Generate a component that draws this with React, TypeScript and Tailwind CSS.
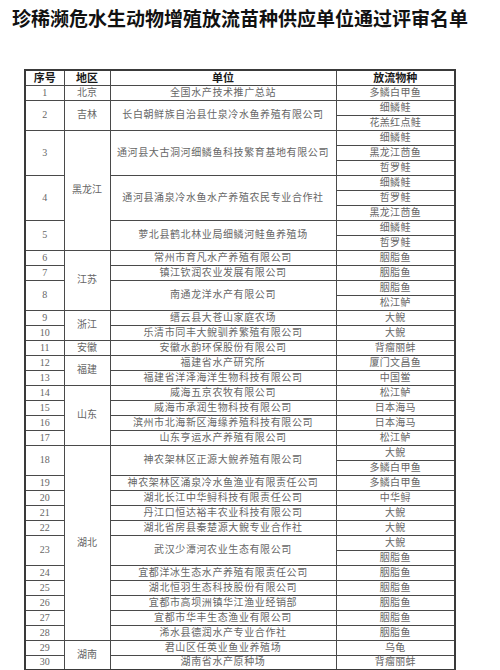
import React from "react";

type Unit = { no: number; name: string; species: string[] };
type Region = { name: string; units: Unit[] };

const REGIONS: Region[] = [
  { name: "北京", units: [{ no: 1, name: "全国水产技术推广总站", species: ["多鳞白甲鱼"] }] },
  {
    name: "吉林",
    units: [{ no: 2, name: "长白朝鲜族自治县仕泉冷水鱼养殖有限公司", species: ["细鳞鲑", "花羔红点鲑"] }],
  },
  {
    name: "黑龙江",
    units: [
      { no: 3, name: "通河县大古洞河细鳞鱼科技繁育基地有限公司", species: ["细鳞鲑", "黑龙江茴鱼", "哲罗鲑"] },
      { no: 4, name: "通河县涌泉冷水鱼水产养殖农民专业合作社", species: ["细鳞鲑", "哲罗鲑", "黑龙江茴鱼"] },
      { no: 5, name: "萝北县鹤北林业局细鳞河鲑鱼养殖场", species: ["细鳞鲑", "哲罗鲑"] },
    ],
  },
  {
    name: "江苏",
    units: [
      { no: 6, name: "常州市育凡水产养殖有限公司", species: ["胭脂鱼"] },
      { no: 7, name: "镇江钦润农业发展有限公司", species: ["胭脂鱼"] },
      { no: 8, name: "南通龙洋水产有限公司", species: ["胭脂鱼", "松江鲈"] },
    ],
  },
  {
    name: "浙江",
    units: [
      { no: 9, name: "缙云县大苍山家庭农场", species: ["大鲵"] },
      { no: 10, name: "乐清市同丰大鲵驯养繁殖有限公司", species: ["大鲵"] },
    ],
  },
  { name: "安徽", units: [{ no: 11, name: "安徽水韵环保股份有限公司", species: ["背瘤丽蚌"] }] },
  {
    name: "福建",
    units: [
      { no: 12, name: "福建省水产研究所", species: ["厦门文昌鱼"] },
      { no: 13, name: "福建省洋泽海洋生物科技有限公司", species: ["中国鲎"] },
    ],
  },
  {
    name: "山东",
    units: [
      { no: 14, name: "威海五京农牧有限公司", species: ["松江鲈"] },
      { no: 15, name: "威海市承润生物科技有限公司", species: ["日本海马"] },
      { no: 16, name: "滨州市北海新区海缘养殖科技有限公司", species: ["日本海马"] },
      { no: 17, name: "山东亨运水产养殖有限公司", species: ["松江鲈"] },
    ],
  },
  {
    name: "湖北",
    units: [
      { no: 18, name: "神农架林区正源大鲵养殖有限公司", species: ["大鲵", "多鳞白甲鱼"] },
      { no: 19, name: "神农架林区涌泉冷水鱼渔业有限责任公司", species: ["多鳞白甲鱼"] },
      { no: 20, name: "湖北长江中华鲟科技有限责任公司", species: ["中华鲟"] },
      { no: 21, name: "丹江口恒达裕丰农业科技有限公司", species: ["大鲵"] },
      { no: 22, name: "湖北省房县秦楚源大鲵专业合作社", species: ["大鲵"] },
      { no: 23, name: "武汉少潭河农业生态有限公司", species: ["大鲵", "胭脂鱼"] },
      { no: 24, name: "宜都洋冰生态水产养殖有限责任公司", species: ["胭脂鱼"] },
      { no: 25, name: "湖北恒羽生态科技股份有限公司", species: ["胭脂鱼"] },
      { no: 26, name: "宜都市高坝洲镇华江渔业经销部", species: ["胭脂鱼"] },
      { no: 27, name: "宜都市华丰生态渔业有限公司", species: ["胭脂鱼"] },
      { no: 28, name: "浠水县德润水产专业合作社", species: ["胭脂鱼"] },
    ],
  },
  {
    name: "湖南",
    units: [
      { no: 29, name: "君山区任英业鱼业养殖场", species: ["乌龟"] },
      { no: 30, name: "湖南省水产原种场", species: ["背瘤丽蚌"] },
    ],
  },
];

const cell = "border border-[#4a4a4a] p-0 text-center align-middle leading-none whitespace-nowrap";

export default function App() {
  const rows: React.ReactNode[] = [];
  REGIONS.forEach((region) => {
    const regionSpan = region.units.reduce((s, u) => s + u.species.length, 0);
    region.units.forEach((unit, uIdx) => {
      unit.species.forEach((sp, sIdx) => {
        rows.push(
          <tr key={`${unit.no}-${sIdx}`} className="h-[15px]">
            {sIdx === 0 && (
              <td rowSpan={unit.species.length} className={cell}>
                {unit.no}
              </td>
            )}
            {uIdx === 0 && sIdx === 0 && (
              <td rowSpan={regionSpan} className={cell}>
                {region.name}
              </td>
            )}
            {sIdx === 0 && (
              <td rowSpan={unit.species.length} className={`${cell} tracking-[0.6px]`}>
                {unit.name}
              </td>
            )}
            <td className={`${cell} tracking-[0.3px]`}>{sp}</td>
          </tr>,
        );
      });
    });
  });

  return (
    <div className="w-[500px] h-[670px] bg-white overflow-hidden font-['Liberation_Serif','Noto_Sans_CJK_SC',serif]">
      <h1 className="pl-[12px] pt-[8px] text-[19px] leading-[20px] font-bold text-[#111] font-['Noto_Sans_CJK_SC',sans-serif]">
        珍稀濒危水生动物增殖放流苗种供应单位通过评审名单
      </h1>
      <table className="ml-[24px] mt-[41px] w-[430px] table-fixed border-collapse border-2 border-[#3a3a3a] text-[10px] text-[#666]">
        <colgroup>
          <col className="w-[39px]" />
          <col className="w-[46px]" />
          <col className="w-[226px]" />
          <col className="w-[119px]" />
        </colgroup>
        <thead>
          <tr className="h-[15px] text-[11px] font-bold text-[#1a1a1a] font-['Noto_Sans_CJK_SC',sans-serif]">
            <td className={cell}>序号</td>
            <td className={cell}>地区</td>
            <td className={cell}>单位</td>
            <td className={cell}>放流物种</td>
          </tr>
        </thead>
        <tbody>{rows}</tbody>
      </table>
    </div>
  );
}
